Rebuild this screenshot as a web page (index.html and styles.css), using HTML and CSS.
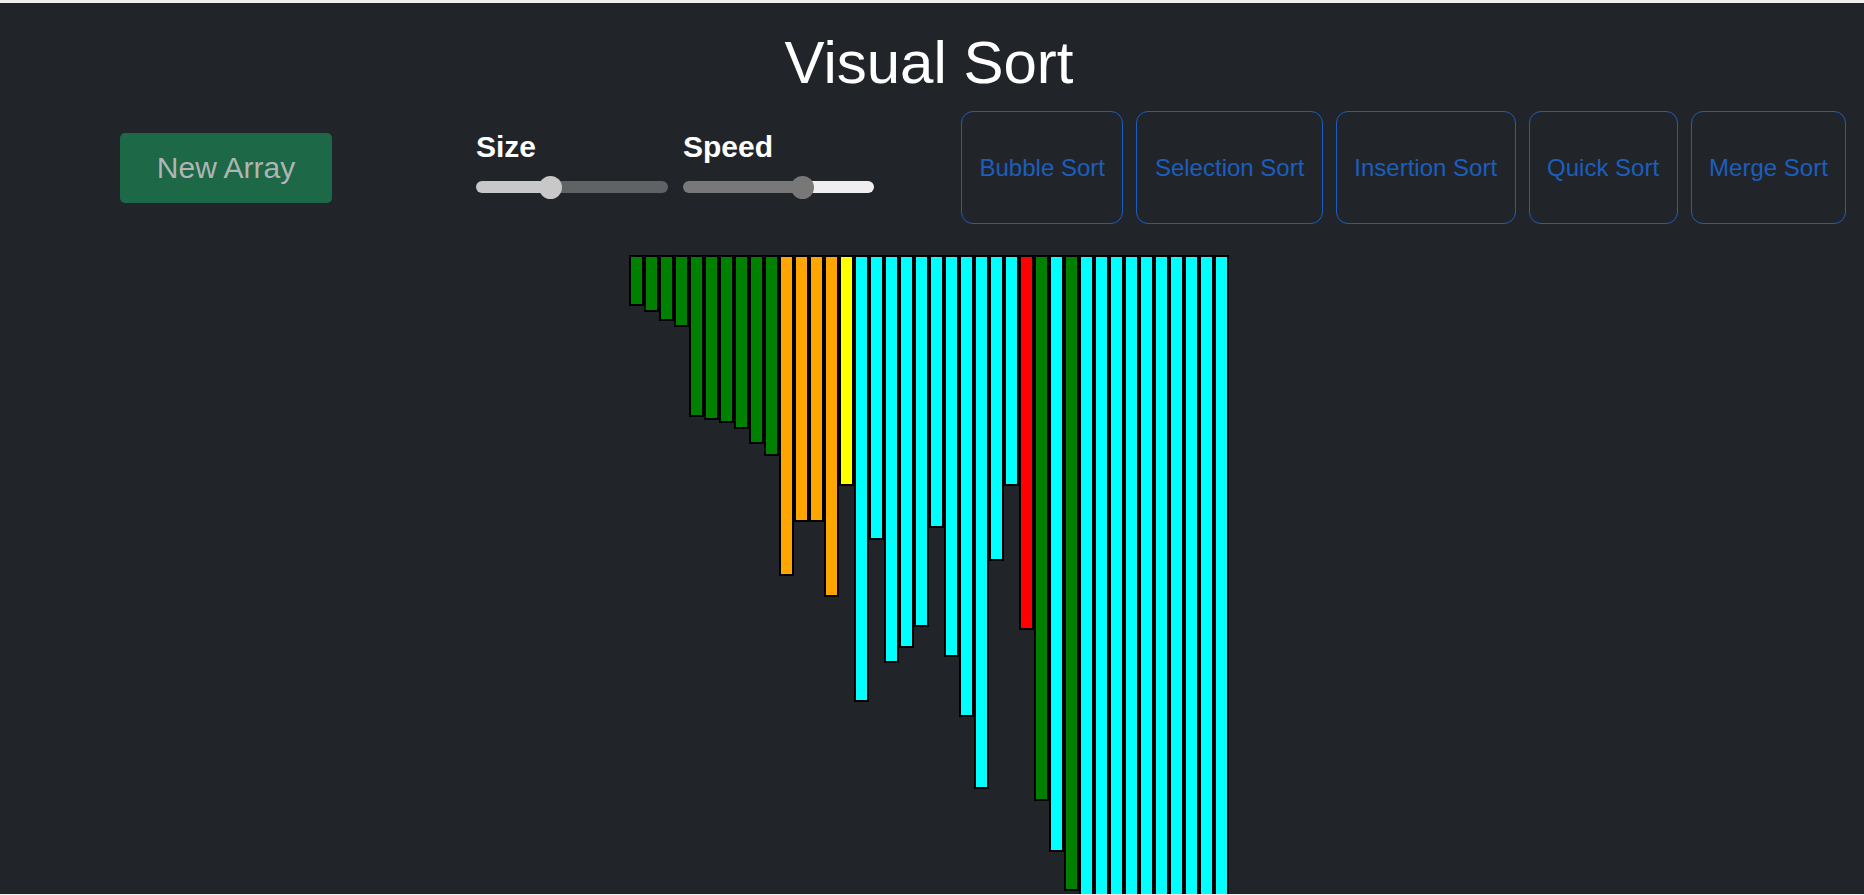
FILE: index.html
```html
<!DOCTYPE html>
<html lang="en">
<head>
<meta charset="utf-8">
<title>Visual Sort</title>
<link rel="stylesheet" href="styles.css">
</head>
<body>
<div class="app">
  <h1 class="title">Visual Sort</h1>
  <div class="controls">
    <button class="new-array">New Array</button>
    <div class="sliders">
      <div class="slider-group size">
        <label class="slider-label" for="size">Size</label>
        <input class="range range-size" id="size" type="range" min="0" max="1000" value="373" style="background: linear-gradient(to right, #c8c8c8 0%, #c8c8c8 38.3%, #5f6366 38.3%, #5f6366 100%);">
      </div>
      <div class="slider-group speed">
        <label class="slider-label" for="speed">Speed</label>
        <input class="range range-speed" id="speed" type="range" min="0" max="1000" value="642" style="background: linear-gradient(to right, #787878 0%, #787878 62.4%, #efefef 62.4%, #efefef 100%);">
      </div>
    </div>
    <div class="sort-buttons">
      <button class="sort-btn">Bubble Sort</button>
      <button class="sort-btn">Selection Sort</button>
      <button class="sort-btn">Insertion Sort</button>
      <button class="sort-btn">Quick Sort</button>
      <button class="sort-btn">Merge Sort</button>
    </div>
  </div>
  <div class="bars">
    <div class="bar green" style="height:51px"></div>
    <div class="bar green" style="height:57px"></div>
    <div class="bar green" style="height:66px"></div>
    <div class="bar green" style="height:72px"></div>
    <div class="bar green" style="height:162px"></div>
    <div class="bar green" style="height:165px"></div>
    <div class="bar green" style="height:168px"></div>
    <div class="bar green" style="height:174px"></div>
    <div class="bar green" style="height:189px"></div>
    <div class="bar green" style="height:201px"></div>
    <div class="bar orange" style="height:321px"></div>
    <div class="bar orange" style="height:267px"></div>
    <div class="bar orange" style="height:267px"></div>
    <div class="bar orange" style="height:342px"></div>
    <div class="bar yellow" style="height:231px"></div>
    <div class="bar cyan" style="height:447px"></div>
    <div class="bar cyan" style="height:285px"></div>
    <div class="bar cyan" style="height:408px"></div>
    <div class="bar cyan" style="height:393px"></div>
    <div class="bar cyan" style="height:372px"></div>
    <div class="bar cyan" style="height:273px"></div>
    <div class="bar cyan" style="height:402px"></div>
    <div class="bar cyan" style="height:462px"></div>
    <div class="bar cyan" style="height:534px"></div>
    <div class="bar cyan" style="height:306px"></div>
    <div class="bar cyan" style="height:231px"></div>
    <div class="bar red" style="height:375px"></div>
    <div class="bar green" style="height:546px"></div>
    <div class="bar cyan" style="height:597px"></div>
    <div class="bar green" style="height:636px"></div>
    <div class="bar cyan" style="height:700px"></div>
    <div class="bar cyan" style="height:700px"></div>
    <div class="bar cyan" style="height:700px"></div>
    <div class="bar cyan" style="height:700px"></div>
    <div class="bar cyan" style="height:700px"></div>
    <div class="bar cyan" style="height:700px"></div>
    <div class="bar cyan" style="height:700px"></div>
    <div class="bar cyan" style="height:700px"></div>
    <div class="bar cyan" style="height:700px"></div>
    <div class="bar cyan" style="height:700px"></div>
  </div>
</div>
</body>
</html>
```
FILE: styles.css
```css
html, body {
  margin: 0;
  padding: 0;
  background: #f0f0f0;
  font-family: "Liberation Sans", Arial, sans-serif;
}

.app {
  margin-top: 3px;
  height: 891px;
  overflow: hidden;
  background: #212529;
  box-sizing: border-box;
  padding-top: 25px;
  padding-right: 6px;
}

.title {
  margin: 0;
  text-align: center;
  color: #ffffff;
  font-size: 60px;
  font-weight: normal;
  line-height: 69px;
}

.controls {
  display: flex;
  align-items: center;
  height: 113px;
  margin-top: 14px;
  padding-left: 120px;
}

.new-array {
  width: 212px;
  height: 70px;
  margin-right: 144px;
  border: none;
  border-radius: 5px;
  background: #1d6846;
  color: #b1b4b5;
  font-family: "Liberation Sans", Arial, sans-serif;
  font-size: 30px;
  padding: 0;
}

.sliders {
  display: flex;
  gap: 15px;
  align-self: flex-start;
  margin-top: 19px;
}

.slider-group {
  display: flex;
  flex-direction: column;
}

.slider-group.size {
  width: 192px;
}

.slider-group.speed {
  width: 191px;
}

.slider-label {
  color: #ffffff;
  font-size: 30px;
  font-weight: bold;
  line-height: 33px;
}

.range {
  -webkit-appearance: none;
  appearance: none;
  width: 100%;
  height: 12px;
  margin: 18px 0 0 0;
  padding: 0;
  border-radius: 6px;
  outline: none;
  border: none;
}

.range::-webkit-slider-thumb {
  -webkit-appearance: none;
  appearance: none;
  width: 23px;
  height: 23px;
  border-radius: 50%;
  border: none;
}

.range-size::-webkit-slider-thumb {
  background: #c8c8c8;
}

.range-speed::-webkit-slider-thumb {
  background: #787878;
}

.sort-buttons {
  display: flex;
  gap: 13px;
  margin-left: 87px;
}

.sort-btn {
  height: 113px;
  padding: 0 17.5px;
  border: 1px solid #1c5ebd;
  border-radius: 12px;
  background: transparent;
  color: #1c5ebd;
  font-family: "Liberation Sans", Arial, sans-serif;
  font-size: 24px;
}

.bars {
  display: flex;
  justify-content: center;
  align-items: flex-start;
  margin-top: 31px;
}

.bar {
  box-sizing: border-box;
  width: 15px;
  border: 2px solid #000000;
  flex: none;
}

.green { background: #008000; }
.orange { background: #ffa500; }
.yellow { background: #ffff00; }
.cyan { background: #00ffff; }
.red { background: #ff0000; }
```
